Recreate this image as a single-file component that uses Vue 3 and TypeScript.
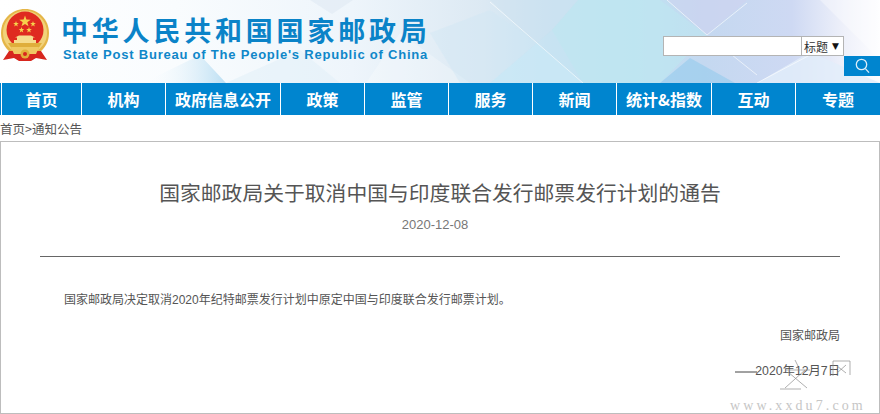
<script setup lang="ts">
const navItems: { label: string; width: number }[] = [
  { label: '首页', width: 79 },
  { label: '机构', width: 83 },
  { label: '政府信息公开', width: 114 },
  { label: '政策', width: 83 },
  { label: '监管', width: 83 },
  { label: '服务', width: 83 },
  { label: '新闻', width: 83 },
  { label: '统计&指数', width: 94 },
  { label: '互动', width: 83 },
  { label: '专题', width: 84 },
]

function star(cx: number, cy: number, r: number): string {
  const pts: string[] = []
  for (let i = 0; i < 10; i++) {
    const rad = i % 2 === 0 ? r : r * 0.4
    const a = -Math.PI / 2 + (i * Math.PI) / 5
    pts.push(`${(cx + rad * Math.cos(a)).toFixed(2)},${(cy + rad * Math.sin(a)).toFixed(2)}`)
  }
  return pts.join(' ')
}
const smallStars = [
  [16, 24],
  [33, 24],
  [21.5, 30],
  [29, 30],
]
</script>

<template>
  <div class="page">
    <header class="head">
      <svg class="bg" width="880" height="83" viewBox="0 0 880 83">
        <defs>
          <linearGradient id="sky" x1="0" y1="0" x2="1" y2="0">
            <stop offset="0" stop-color="#ffffff" />
            <stop offset="0.2" stop-color="#f9fcfe" />
            <stop offset="0.4" stop-color="#eef5fb" />
            <stop offset="0.55" stop-color="#dce9f3" />
            <stop offset="0.62" stop-color="#c8e3f2" />
            <stop offset="0.72" stop-color="#bfe3f2" />
            <stop offset="0.8" stop-color="#c4d8f0" />
            <stop offset="0.9" stop-color="#ced9f3" />
            <stop offset="0.96" stop-color="#eff1fa" />
            <stop offset="1" stop-color="#fdfdff" />
          </linearGradient>
          <linearGradient id="blob" x1="0" y1="0" x2="1" y2="0">
            <stop offset="0" stop-color="#ffffff" stop-opacity="0" />
            <stop offset="1" stop-color="#bcdff3" />
          </linearGradient>
        </defs>
        <rect width="880" height="83" fill="url(#sky)" />
        <polygon points="143,83 200,55 226,83" fill="url(#blob)" />
        <polygon points="226,83 300,50 340,83" fill="#e2f0f9" opacity="0.6" />
        <polygon points="310,0 353,0 332,14" fill="#dfeaf4" opacity="0.6" />
        <polygon points="366,83 400,33 470,83" fill="#ffffff" opacity="0.25" />
        <polygon points="430,33 490,10 537,43 490,83 460,83" fill="#d0e6f4" opacity="0.45" />
        <polygon points="490,83 537,43 583,83" fill="#c9e7f6" opacity="0.85" />
        <polygon points="552,30 578,0 660,0 707,35 660,83 583,83" fill="#bde8f1" opacity="0.55" />
        <polygon points="490,0 578,0 552,30 537,43" fill="#cfe2ef" opacity="0.5" />
        <polygon points="660,83 690,58 735,83" fill="#9ecdee" opacity="0.75" />
        <polygon points="667,0 747,0 707,35" fill="#cfd2f0" opacity="0.5" />
        <polygon points="757,83 810,52 880,83" fill="#e2eefa" opacity="0.8" />
        <polygon points="820,0 880,0 880,60" fill="#ffffff" opacity="0.35" />
        <path d="M490 2 L537 43 L583 83 M667 0 L707 35 L747 3 M732 55 L757 75 M757 83 L810 55" stroke="#fff" stroke-width="1" opacity="0.6" fill="none" />
      </svg>

      <div class="brand">
        <svg class="emblem" width="48" height="52" viewBox="1 9 48 52">
          <path d="M25 9 C38 9 49 19 49 33 C49 42 45 48 39 53 L11 53 C5 48 1 42 1 33 C1 19 12 9 25 9Z" fill="#e5b648" />
          <path d="M25 10.5 C36 10.5 47 20 47 33 C47 41 43 46 38 50 L12 50 C7 46 3 41 3 33 C3 20 14 10.5 25 10.5Z" fill="#f1d27a" />
          <path d="M9 51 L3 60 L14 58 L19 61 L31 61 L36 58 L47 60 L41 51 Z" fill="#d7261e" />
          <circle cx="25" cy="30" r="18.5" fill="#df2a20" />
          <polygon :points="star(25, 21.5, 6)" fill="#f6d24c" />
          <polygon v-for="s in smallStars" :key="s[0]" :points="star(s[0], s[1], 3)" fill="#f6d24c" />
          <path d="M14 43 H36 V40 H33 V37.5 H35 L31 35.5 H19 L15 37.5 H17 V40 H14Z" fill="#f6dc8e" />
          <path d="M8 43 H42 L38 49 H12Z" fill="#dfae3b" />
          <path d="M11 47 H39 L36 54 H14Z" fill="#efc964" />
          <circle cx="25" cy="54" r="4.5" fill="#e2ae3b" />
          <circle cx="25" cy="54" r="2" fill="#d7261e" />
        </svg>
        <div class="names">
          <div class="cn">中华人民共和国国家邮政局</div>
          <div class="en">State Post Bureau of The People's Republic of China</div>
        </div>
      </div>

      <div class="search">
        <div class="search-box">
          <div class="field"></div>
          <div class="picker"><span>标题</span><i>▼</i></div>
        </div>
        <button class="go" aria-label="搜索">
          <svg width="15" height="16" viewBox="0 0 15 16" fill="none" stroke="#dcedf8" stroke-width="1.3">
            <circle cx="6.5" cy="6.5" r="5.2" />
            <path d="M10.4 10.6 L14 14.6" />
          </svg>
        </button>
      </div>
    </header>

    <nav class="nav">
      <a v-for="n in navItems" :key="n.label" class="nav-item" :style="{ width: n.width + 'px' }">{{ n.label }}</a>
    </nav>

    <div class="crumb">首页&gt;通知公告</div>

    <main class="card">
      <h1 class="title">国家邮政局关于取消中国与印度联合发行邮票发行计划的通告</h1>
      <div class="date">2020-12-08</div>
      <hr class="rule" />
      <p class="body">国家邮政局决定取消2020年纪特邮票发行计划中原定中国与印度联合发行邮票计划。</p>
      <p class="sign">国家邮政局</p>
      <p class="sign-date">2020年12月7日</p>

      <div class="mark">
        <svg width="130" height="42" viewBox="0 0 130 42" fill="none" stroke="#8d8d8d" stroke-width="0.7">
          <path d="M0 14 H22" stroke="#444" stroke-width="1" />
          <path d="M60 2 L63 8 M50 12 H75 M70 12 L50 30 M53 14 L72 30 M45 31 H66" />
          <path d="M98 3 H115 V17 M98 3 V18 M102 8 L111 15 M111 7 L102 15" />
        </svg>
        <div class="mark-url">www.xxdu7.com</div>
      </div>
    </main>
  </div>
</template>

<style scoped>
.page {
  position: relative;
  width: 880px;
  height: 414px;
  overflow: hidden;
  background: #fff;
  font-family: "Liberation Sans", "Noto Sans CJK SC", sans-serif;
}
.head {
  position: relative;
  display: flex;
  justify-content: space-between;
  height: 83px;
  overflow: hidden;
}
.bg {
  position: absolute;
  left: 0;
  top: 0;
}
.brand {
  position: relative;
  display: flex;
  gap: 12px;
  padding: 9px 0 0 1px;
}
.emblem {
  flex: none;
}
.names {
  padding-top: 6px;
}
.cn {
  font-family: "Noto Sans CJK SC", sans-serif;
  font-size: 27px;
  font-weight: 700;
  line-height: 29px;
  letter-spacing: 3.8px;
  color: #0a83c8;
  white-space: nowrap;
}
.en {
  height: 14px;
  margin: 3px 0 0 2px;
  overflow: hidden;
  font-size: 13px;
  font-weight: 700;
  line-height: 16px;
  letter-spacing: 0.78px;
  color: #0f87c9;
  white-space: nowrap;
}
.search {
  position: relative;
  display: flex;
  flex-direction: column;
  align-items: flex-end;
  padding-top: 36px;
}
.search-box {
  display: flex;
  width: 181px;
  height: 20px;
  margin-right: 36px;
  box-sizing: border-box;
  border: 1px solid #b4b4b4;
  background: #fff;
}
.field {
  width: 137px;
  border-right: 1px solid #b4b4b4;
}
.picker {
  display: flex;
  flex: 1;
  align-items: center;
  justify-content: space-between;
  padding: 0 4px 0 2px;
  font-size: 12px;
  color: #333;
}
.picker i {
  font-family: "DejaVu Sans", sans-serif;
  font-style: normal;
  font-size: 9px;
  color: #111;
}
.go {
  display: flex;
  align-items: center;
  justify-content: center;
  width: 36px;
  height: 20px;
  padding: 0;
  border: 0;
  background: #0085cf;
}
.nav {
  display: flex;
  gap: 1px;
  height: 32px;
  padding-left: 2px;
  box-sizing: border-box;
  background: #fff;
  box-shadow: inset 1px 0 0 #0085cf;
}
.nav-item {
  background: #0085cf;
  font-family: "Noto Sans CJK SC", sans-serif;
  font-size: 16px;
  font-weight: 700;
  line-height: 32px;
  text-align: center;
  color: #fff;
  white-space: nowrap;
}
.crumb {
  height: 26px;
  font-family: "Noto Sans CJK SC", sans-serif;
  font-size: 12.5px;
  line-height: 27px;
  color: #555;
}
.card {
  position: relative;
  box-sizing: border-box;
  height: 273px;
  padding: 0 39px;
  border: 1px solid #bdbdbd;
  color: #555;
}
.title {
  margin: 35px 0 0;
  font-family: "Noto Sans CJK SC", sans-serif;
  font-size: 20.8px;
  font-weight: 400;
  line-height: 30px;
  text-align: center;
  color: #555;
  white-space: nowrap;
}
.date {
  margin-top: 9px;
  padding-right: 10px;
  font-size: 13px;
  line-height: 18px;
  text-align: center;
  color: #777;
}
.rule {
  height: 1px;
  margin: 22px 0 0;
  border: 0;
  background: #666;
}
.body {
  margin: 34px 0 0 24px;
  font-size: 12px;
  line-height: 18px;
  color: #555;
}
.sign,
.sign-date {
  line-height: 18px;
  text-align: right;
  color: #555;
}
.sign {
  margin: 18px 0 0;
  font-size: 12px;
}
.sign-date {
  margin: 17px 0 0;
  font-size: 12.3px;
}
.mark {
  position: absolute;
  left: 734px;
  top: 216px;
  width: 136px;
}
.mark svg {
  display: block;
}
.mark-url {
  margin: -1px 0 0 -5px;
  font-family: "Liberation Serif", serif;
  font-size: 14px;
  line-height: 14px;
  letter-spacing: 3.1px;
  color: #c6c6c6;
  white-space: nowrap;
}
</style>
